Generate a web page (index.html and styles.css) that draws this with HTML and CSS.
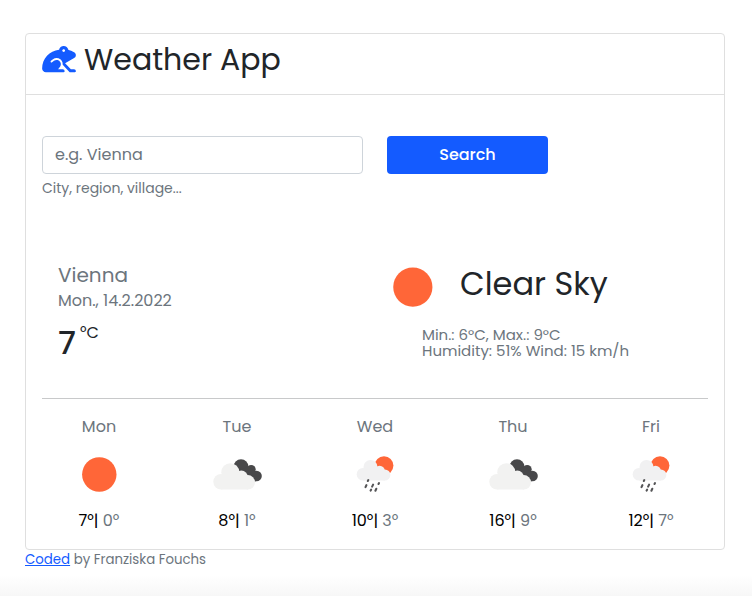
FILE: index.html
```html
<!DOCTYPE html>
<html lang="en">
<head>
<meta charset="utf-8">
<title>Weather App</title>
<link rel="stylesheet" href="styles.css">
</head>
<body>
<svg width="0" height="0" class="defs" aria-hidden="true">
  <symbol id="sun" viewBox="0 0 50 50"><circle cx="25.3" cy="25.5" r="17.2" fill="#ff6638"/></symbol>
  <symbol id="clouds" viewBox="0 0 50 50">
    <g fill="#48484a"><circle cx="29" cy="17.8" r="7.5"/><circle cx="39.2" cy="20.4" r="4.5"/><circle cx="44.5" cy="27" r="5.3"/><path d="M26 20l10.5-1.5 7 4 0 10-7 .5z"/></g>
    <g fill="#f2f2f1"><circle cx="9" cy="32.8" r="7.7"/><circle cx="18.3" cy="23.2" r="9"/><circle cx="29.3" cy="28" r="6.5"/><circle cx="35.8" cy="33.3" r="7.2"/><path d="M9 30l8-4h16l3 4v10.5H9z"/></g>
  </symbol>
  <symbol id="rain" viewBox="0 0 50 50">
    <circle cx="34" cy="16.6" r="9.4" fill="#ff6638"/>
    <g fill="#f1f1f2"><circle cx="13" cy="25.2" r="6.3"/><circle cx="20.5" cy="18" r="7"/><circle cx="29.6" cy="22" r="5.3"/><circle cx="34.8" cy="26" r="5.6"/><path d="M13 23l7-4h10l5 4v8.5H13z"/></g>
    <path d="M18.3 31.1l-.5 .9M16.4 36.2l-.9 1.9M23.1 35.6l-1 2M21.1 40.7l-.5 .9M29 34.1l-.5 .9M26.3 39.8l-.9 1.9" fill="none" stroke="#555557" stroke-width="2.1" stroke-linecap="round"/>
  </symbol>
</svg>
<main class="card">
  <header class="card-header">
    <svg class="frog" viewBox="0 0 576 512" aria-hidden="true"><path fill="currentColor" d="M446.53 97.43C439.67 60.23 407.19 32 368 32c-39.23 0-71.72 28.29-78.54 65.54C126.75 112.96-.5 250.12 0 416.98.11 451.9 29.08 480 64 480h304c8.84 0 16-7.16 16-16 0-17.67-14.33-32-32-32h-79.49l35.8-48.33c24.14-36.23 10.35-88.28-33.71-106.6-23.89-9.93-51.55-4.65-72.24 10.88l-32.76 24.59c-7.06 5.31-17.09 3.91-22.41-3.19-5.3-7.08-3.88-17.11 3.19-22.41l34.78-26.09c36.84-27.66 88.28-27.62 125.13 0 10.87 8.15 45.87 39.06 40.8 93.21L469.62 480H560c8.84 0 16-7.16 16-16 0-17.67-14.33-32-32-32h-53.63l-98.52-104.68 154.44-86.65A58.16 58.16 0 0 0 576 189.94c0-21.4-11.72-40.95-30.48-51.23-40.56-22.22-98.99-41.28-98.99-41.28zM368 136c-13.26 0-24-10.75-24-24 0-13.26 10.74-24 24-24 13.25 0 24 10.74 24 24 0 13.25-10.75 24-24 24z"/></svg>
    <h1 class="title">Weather App</h1>
  </header>
  <div class="card-body">
    <form class="search">
      <div class="field">
        <input class="input" type="text" placeholder="e.g. Vienna">
        <div class="hint">City, region, village...</div>
      </div>
      <button class="button" type="button">Search</button>
    </form>
    <section class="current">
      <div class="place">
        <h2 class="city">Vienna</h2>
        <div class="date">Mon., 14.2.2022</div>
        <div class="temp"><span class="degrees">7</span><span class="unit">°C</span></div>
      </div>
      <div class="conditions">
        <div class="sky"><svg class="sky-icon" aria-hidden="true"><use href="#sun"/></svg><h2 class="sky-name">Clear Sky</h2></div>
        <div class="details">Min.: 6°C, Max.: 9°C<br>Humidity: 51% Wind: 15 km/h</div>
      </div>
    </section>
    <section class="forecast">
      <div class="day"><div class="name">Mon</div><svg class="icon"><use href="#sun"/></svg><div class="temps"><span class="max">7°|</span> 0°</div></div>
      <div class="day"><div class="name">Tue</div><svg class="icon"><use href="#clouds"/></svg><div class="temps"><span class="max">8°|</span> 1°</div></div>
      <div class="day"><div class="name">Wed</div><svg class="icon"><use href="#rain"/></svg><div class="temps"><span class="max">10°|</span> 3°</div></div>
      <div class="day"><div class="name">Thu</div><svg class="icon"><use href="#clouds"/></svg><div class="temps"><span class="max">16°|</span> 9°</div></div>
      <div class="day"><div class="name">Fri</div><svg class="icon"><use href="#rain"/></svg><div class="temps"><span class="max">12°|</span> 7°</div></div>
    </section>
  </div>
</main>
<footer class="credit"><a class="link" href="#">Coded</a> by Franziska Fouchs</footer>
</body>
</html>
```
FILE: styles.css
```css
* { box-sizing: border-box; }
html { height: 100%; background: #fff; }
body {
  margin: 0;
  height: 596px;
  padding: 33px 27px 0 25px;
  overflow: hidden;
  font-family: Poppins, Inter, "Open Sans", sans-serif;
  font-size: 16px;
  line-height: 24px;
  color: #6c757d;
  background: linear-gradient(#fff 575px, #f7f7f7 596px);
}
h1, h2 { margin: 0; font-weight: 400; color: #212529; }
.defs { display: block; }
.card { height: 517px; border: 1px solid #dfdfdf; border-radius: 4px; background: #fff; }
.card-header { display: flex; gap: 8px; height: 61px; padding: 10px 16px 0; border-bottom: 1px solid #dfdfdf; }
.frog { width: 34px; height: 30px; color: #145bff; }
.title { font-size: 30px; line-height: 31px; white-space: nowrap; }
.card-body { padding: 41px 16px 0; }
.search { display: flex; gap: 24px; height: 127px; }
.field { width: 321px; }
.input {
  display: block; width: 100%; height: 38px; padding: 0 12px 2px;
  border: 1px solid #ced4da; border-radius: 4px; background: #fff;
  font: inherit; outline: none;
}
.input::placeholder { color: #6c757d; opacity: 1; }
.hint { margin-top: 4px; font-size: 14px; line-height: 21px; }
.button {
  width: 161px; height: 38px; border: 0; border-radius: 4px; background: #145bff;
  color: #fff; font: inherit; font-weight: 500;
}
.current { display: flex; height: 136px; padding-left: 16px; border-bottom: 1px solid #c8c9ca; }
.place { width: 334px; }
.city { font-size: 20px; line-height: 24px; color: #6c757d; }
.date { margin-top: 2px; }
.temp { display: flex; gap: 4px; margin-top: 12px; color: #212529; }
.degrees { font-size: 32px; line-height: 36px; font-weight: 500; }
.unit { line-height: 16px; }
.sky { display: flex; height: 50px; }
.sky-icon { width: 57px; height: 57px; margin-top: -5px; margin-left: -8px; }
.sky-name { margin-left: 19px; font-size: 32px; line-height: 42px; white-space: nowrap; }
.details { margin: 14px 0 0 30px; font-size: 15px; line-height: 16px; white-space: nowrap; }
.forecast { display: grid; grid-template-columns: repeat(5, 138px); margin-left: -12px; padding-top: 16px; }
.day { display: flex; flex-direction: column; align-items: center; }
.icon { width: 50px; height: 50px; margin: 10px 0; }
.max { color: #000; }
.credit { font-size: 13.33px; line-height: 19px; }
.link { color: #145bff; }
```
